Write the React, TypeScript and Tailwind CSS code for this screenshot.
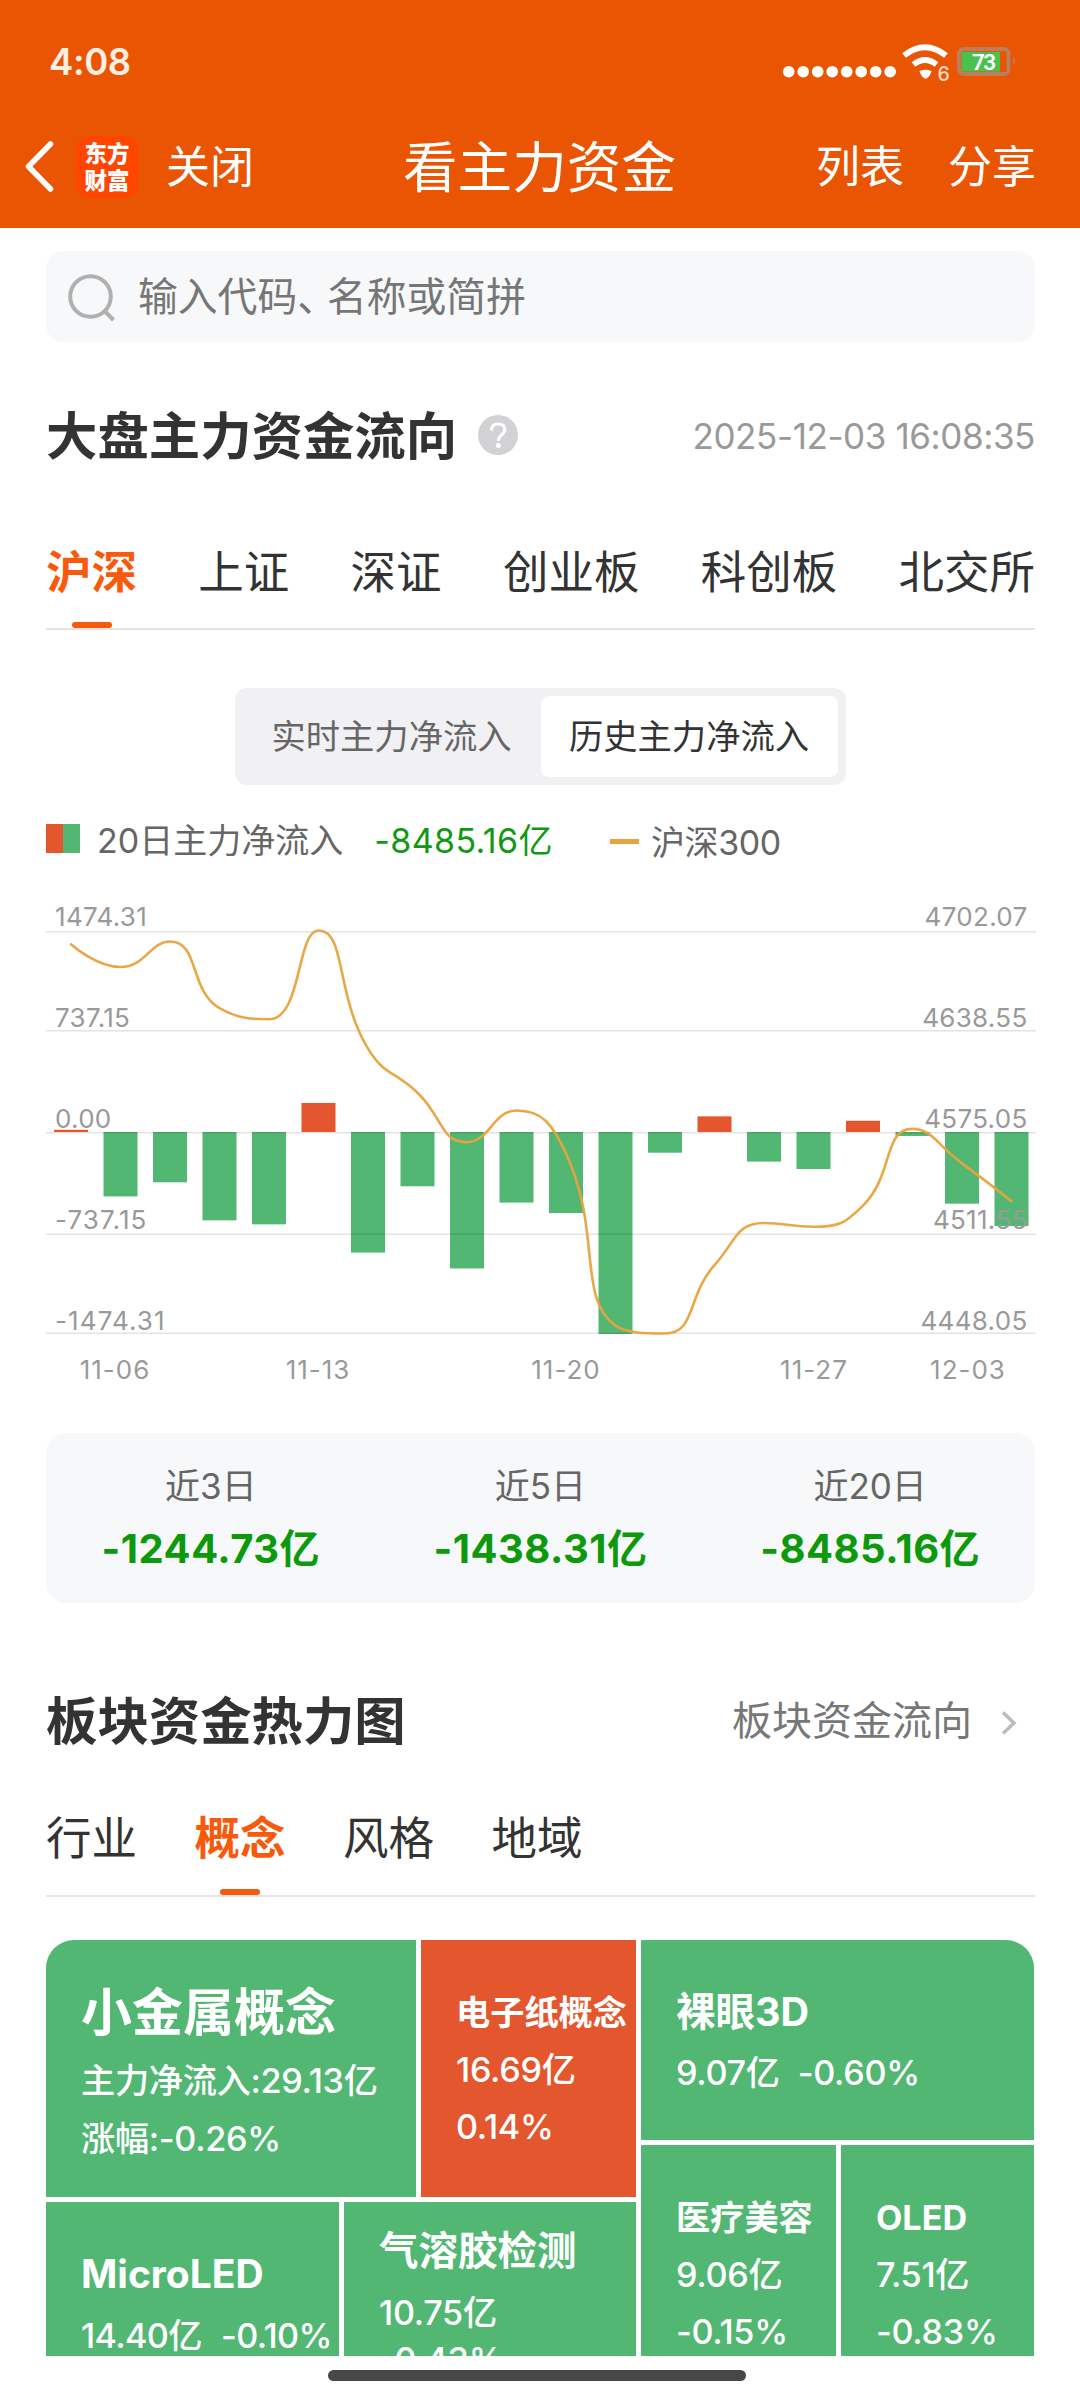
// 看主力资金 — 大盘主力资金流向 + 板块资金热力图
import type { ReactNode } from "react";
import clsx from "clsx";

const MARKET_TABS = ["沪深", "上证", "深证", "创业板", "科创板", "北交所"];
const SECTOR_TABS = ["行业", "概念", "风格", "地域"];

const SUMMARY = [
  { label: "近3日", value: "-1244.73亿" },
  { label: "近5日", value: "-1438.31亿" },
  { label: "近20日", value: "-8485.16亿" },
];

// 每日主力净流入（亿）
const FLOWS = [
  16, -470, -367, -645, -674, 212, -880, -396, -996, -515, -592, -1474.31, -151,
  114, -216, -270, 82, -29, -523, -686,
];
// 沪深300 收盘
const INDEX = [
  4694.3, 4679.9, 4696.1, 4653.9, 4646.9, 4703, 4628.3, 4600.4, 4569.1, 4589.1,
  4562, 4453, 4448.05, 4491.3, 4518, 4515.6, 4529, 4577.5, 4555.7, 4531.8,
];

const GRID = [
  { y: 39, left: "1474.31", right: "4702.07" },
  { y: 138, left: "737.15", right: "4638.55" },
  { y: 240, left: "0.00", right: "4575.05" },
  { y: 341.5, left: "-737.15", right: "4511.55" },
  { y: 440.5, left: "-1474.31", right: "4448.05" },
];
const DATES = [
  { x: 69, text: "11-06" },
  { x: 272, text: "11-13" },
  { x: 520, text: "11-20" },
  { x: 768, text: "11-27" },
  { x: 922, text: "12-03" },
];

const ZERO = 239;
const STEP = 49.5;
const centerX = (i: number) => 25 + i * STEP;
const flowY = (v: number) => ZERO - (v / 1474.31) * 202;
const indexY = (v: number) => 440.5 - ((v - 4448.05) / 254.02) * 401.5;

const clamp = (v: number, a: number, b: number) =>
  Math.min(Math.max(v, Math.min(a, b)), Math.max(a, b));

// Smooth bezier through all points, control points never overshoot a segment
function smoothPath(pts: number[][]) {
  let d = `M${pts[0][0]} ${pts[0][1]}`;
  let cp = pts[0];
  for (let i = 1; i < pts.length; i++) {
    const prev = pts[i - 1];
    const p = pts[i];
    const next = pts[i + 1];
    let cpIn = p;
    let cpOut = p;
    if (next) {
      const lenPrev = Math.hypot(p[0] - prev[0], p[1] - prev[1]);
      const lenNext = Math.hypot(next[0] - p[0], next[1] - p[1]);
      const ratio = lenNext / (lenNext + lenPrev);
      cpOut = [0, 1].map((k) =>
        clamp(p[k] + (next[k] - prev[k]) * 0.5 * ratio, p[k], next[k])
      );
      cpIn = [0, 1].map((k) =>
        clamp(p[k] - ((cpOut[k] - p[k]) * lenPrev) / lenNext, prev[k], p[k])
      );
      cpOut = [0, 1].map((k) => p[k] + ((p[k] - cpIn[k]) * lenNext) / lenPrev);
    }
    d += `C${cp[0]} ${cp[1]} ${cpIn[0]} ${cpIn[1]} ${p[0]} ${p[1]}`;
    cp = cpOut;
  }
  return d;
}

function StatusBar() {
  return (
    <div className="flex h-[96px] items-start justify-between pt-[40px] pl-[49px] pr-[64px] text-[#ffeee2]">
      <span className="text-[36.500px] leading-[44px] font-semibold tracking-[-0.4px]">4:08</span>
      <svg width="236" height="56" viewBox="0 0 236 56" className="text-white">
        {Array.from({ length: 8 }, (_, i) => (
          <circle key={i} cx={8.7 + i * 14.5} cy="31.700" r="5.800" fill="currentColor" />
        ))}
        <g fill="none" stroke="currentColor" strokeWidth="6">
          <path d="M124 15.500Q145 -1 166 15.500" />
          <path d="M133.500 24.500Q145 15.500 156.500 24.500" />
        </g>
        <path d="M139.500 31Q145.500 28.500 151.500 31Q150.500 36 145.500 39Q140.500 36 139.500 31Z" fill="currentColor" />
        <text x="157.500" y="41" fontSize="19.500" fontWeight="500" fill="#ffdcc4">6</text>
        <rect x="179" y="9" width="49.500" height="25" rx="4.500" fill="none" stroke="#b9805f" strokeWidth="3.800" />
        <path d="M233.500 17.500Q236.500 20.500 233.500 24Z" fill="#b9805f" stroke="#b9805f" />
        <rect x="181.500" y="12" width="38.500" height="19.500" fill="#4ac14e" />
        <text x="192" y="30" fontSize="22.500" fontWeight="600" letterSpacing="-1.500" fill="#fff" className="font-['Roboto',sans-serif]">73</text>
      </svg>
    </div>
  );
}

function NavBar() {
  return (
    <div className="flex h-[132px] items-center pt-[10px] pl-[24px] pr-[44px] text-white">
      <div className="flex w-[379px] items-center">
        <svg width="32" height="54" viewBox="0 0 32 54" fill="none" stroke="currentColor" strokeWidth="5.500" strokeLinecap="round" strokeLinejoin="round">
          <path d="M26.500 4L4.500 26.500L26.500 49" />
        </svg>
        <div className="ml-[20px] flex h-[62px] w-[62px] flex-col items-center justify-center rounded-[13px] bg-[#ff4500] text-[22.500px] leading-[27px] font-black">
          <span>东方</span>
          <span>财富</span>
        </div>
        <span className="ml-[28px] text-[44px] leading-[60px]">关闭</span>
      </div>
      <h1 className="text-[54.600px] leading-[70px]">看主力资金</h1>
      <div className="ml-auto flex gap-[44px] text-[44px] leading-[60px]">
        <span>列表</span>
        <span>分享</span>
      </div>
    </div>
  );
}

function Tab({ active, children }: { active?: boolean; children: ReactNode }) {
  return (
    <div
      className={clsx(
        "flex flex-col items-center justify-between text-[45.500px] leading-[60px]",
        active ? "font-bold text-[#f75a0c]" : "text-[#333]"
      )}
    >
      <span>{children}</span>
      <span className={clsx("h-[6px] w-[40px] rounded-full", active && "bg-[#f75a0c]")} />
    </div>
  );
}

function FlowChart() {
  const line = smoothPath(INDEX.map((v, i) => [centerX(i), indexY(v)]));
  return (
    <svg width="990" height="500" viewBox="0 0 990 500" fontSize="26">
      {FLOWS.map((v, i) => (
        <rect
          key={i}
          x={centerX(i) - 17}
          y={Math.min(ZERO, flowY(v))}
          width="34"
          height={Math.abs(flowY(v) - ZERO)}
          fill={v > 0 ? "#e4572e" : "#52b773"}
        />
      ))}
      {GRID.map((g) => (
        <rect key={g.y} y={g.y - 1} width="990" height="1.500" fill="#000" fillOpacity="0.11" />
      ))}
      <path d={line} fill="none" stroke="#e8a33d" strokeOpacity="0.95" strokeWidth="2.600" strokeLinecap="round" />
      <g fill="#999">
        {GRID.map((g, i) => (
          <g key={g.y}>
            <text x="9" y={32.5 + i * 101} letterSpacing={g.left.startsWith("-") ? 1.1 : 0.3}>{g.left}</text>
            <text x="981.500" y={32.5 + i * 101} textAnchor="end" letterSpacing="0.3">{g.right}</text>
          </g>
        ))}
        {DATES.map((d) => (
          <text key={d.text} x={d.x} y="485.500" textAnchor="middle" letterSpacing="1">{d.text}</text>
        ))}
      </g>
    </svg>
  );
}

interface CellProps {
  className: string;
  nameClass: string;
  name: string;
  children: ReactNode;
}

function Cell({ className, nameClass, name, children }: CellProps) {
  return (
    <div className={clsx("shrink-0 overflow-hidden pl-[35px] text-[34.200px] leading-[57px] font-medium tracking-[-0.3px] whitespace-nowrap text-white", className)}>
      <div className={clsx("font-bold tracking-normal", nameClass)}>{name}</div>
      {children}
    </div>
  );
}

function HeatMap() {
  return (
    <div className="mt-[43px] flex h-[416px] gap-[5px] overflow-hidden rounded-t-[28px]">
      <div className="flex w-[590px] flex-col gap-[5px]">
        <div className="flex h-[257px] shrink-0 gap-[5px]">
          <Cell className="w-[370px] bg-[#52b773] pt-[43px]" nameClass="text-[51px] leading-[60px]" name="小金属概念">
            <div className="pt-[9px] leading-[58px]">
              <p>主力净流入:29.13亿</p>
              <p>涨幅:-0.26%</p>
            </div>
          </Cell>
          <Cell className="w-[215px] bg-[#e4572e] pt-[44px]" nameClass="text-[34.200px] leading-[57px]" name="电子纸概念">
            <p>16.69亿</p>
            <p>0.14%</p>
          </Cell>
        </div>
        <div className="flex h-[257px] shrink-0 gap-[5px]">
          <Cell className="w-[293px] bg-[#52b773] pt-[42px]" nameClass="text-[39px] leading-[60px]" name="MicroLED">
            <p className="pt-[3px] tracking-[-0.6px]">
              14.40亿<span className="ml-[19px]">-0.10%</span>
            </p>
          </Cell>
          <Cell className="w-[292px] bg-[#52b773] pt-[19px]" nameClass="text-[39.500px] leading-[60px]" name="气溶胶检测">
            <p className="pt-[3px]">10.75亿</p>
            <p className="-mt-[10px]">-0.43%</p>
          </Cell>
        </div>
      </div>
      <div className="flex w-[394px] flex-col gap-[5px]">
        <Cell className="h-[200px] bg-[#52b773] pt-[42px]" nameClass="text-[39.500px] leading-[60px]" name="裸眼3D">
          <p className="pt-[2px]">
            9.07亿<span className="ml-[18px]">-0.60%</span>
          </p>
        </Cell>
        <div className="flex h-[257px] shrink-0 gap-[5px]">
          <Cell className="w-[195px] bg-[#52b773] pt-[44px]" nameClass="text-[34.200px] leading-[57px]" name="医疗美容">
            <p>9.06亿</p>
            <p>-0.15%</p>
          </Cell>
          <Cell className="w-[194px] bg-[#52b773] pt-[44px]" nameClass="text-[34.200px] leading-[57px]" name="OLED">
            <p>7.51亿</p>
            <p>-0.83%</p>
          </Cell>
        </div>
      </div>
    </div>
  );
}

export default function App() {
  return (
    <div
      lang="zh-CN"
      className="flex h-[2400px] w-[1080px] flex-col overflow-hidden bg-white font-['Inter','Noto_Sans_CJK_SC',sans-serif] text-[#333]"
    >
      <header className="h-[228px] shrink-0 bg-[#ea5504]">
        <StatusBar />
        <NavBar />
      </header>

      <main className="flex flex-col px-[46px]">
        {/* Search */}
        <div className="mt-[23px] flex h-[91px] w-[989px] shrink-0 items-center rounded-[17px] bg-[#f7f8fa] pl-[22px] text-[#767676]">
          <svg width="48" height="50" viewBox="0 0 48 50" fill="none" stroke="#b0b0b0" strokeWidth="4">
            <circle cx="22.500" cy="24.500" r="20.300" />
            <path d="M36.500 39L45.500 48" />
          </svg>
          <span className="ml-[22px] text-[39.800px] leading-[56px]">
            输入代码<span className="tracking-[-10px]">、</span>名称或简拼
          </span>
        </div>

        {/* Market flow */}
        <div className="mt-[58px] flex h-[72px] w-[989px] items-center">
          <h2 className="text-[51.400px] leading-[72px] font-bold">大盘主力资金流向</h2>
          <svg width="40" height="40" viewBox="0 0 40 40" className="-mt-[2px] ml-[21px]">
            <circle cx="20" cy="20" r="20" fill="#d2d2d4" />
            <path d="M13.500 15.500Q13.500 9 20 9Q26.800 9 26.800 14.500Q26.800 17.500 23.500 20Q20.300 22.500 20.300 26" fill="none" stroke="#fff" strokeWidth="3.200" />
            <circle cx="20.300" cy="30.500" r="2.500" fill="#fff" />
          </svg>
          <span className="ml-auto text-[35px] leading-[48px] tracking-[-0.4px] text-[#999]">
            2025-12-03 16:08:35
          </span>
        </div>

        <div className="mt-[71px] flex h-[87px] w-[989px] justify-between border-b-2 border-[#e5e5e5]">
          {MARKET_TABS.map((tab, i) => (
            <Tab key={tab} active={i === 0}>{tab}</Tab>
          ))}
        </div>

        <div className="mt-[58px] flex h-[97px] w-[611px] items-center self-center rounded-[12px] bg-[#f1f1f4] p-[8px] text-[34.300px] leading-[48px]">
          <span className="flex-1 text-center text-[#666]">实时主力净流入</span>
          <span className="flex h-[81px] w-[297px] items-center justify-center rounded-[8px] bg-white">历史主力净流入</span>
        </div>

        {/* Legend */}
        <div className="mt-[31px] flex h-[50px] items-center text-[34px] leading-[48px] text-[#666]">
          <span className="-mt-[5px] flex h-[29px] w-[34px]">
            <span className="w-[17px] bg-[#e4572e]" />
            <span className="w-[17px] bg-[#52b773]" />
          </span>
          <span className="ml-[17px]">20日主力净流入</span>
          <span className="ml-[31px] tracking-[0.4px] text-[#119911]">-8485.16亿</span>
          <span className="ml-[57px] h-[5px] w-[29px] bg-[#e8a33d]" />
          <span className="ml-[12px] pt-[3px] tracking-[-0.4px]">沪深300</span>
        </div>

        <div className="mt-[27px] h-[500px]">
          <FlowChart />
        </div>

        <div className="mt-[40px] grid h-[170px] w-[989px] grid-cols-3 rounded-[20px] bg-[#f7f8fa] pt-[29px] text-center">
          {SUMMARY.map((s) => (
            <div key={s.label}>
              <p className="text-[35px] leading-[48px] text-[#666]">{s.label}</p>
              <p className="mt-[11px] text-[40px] leading-[56px] font-bold tracking-[0.5px] text-[#0c9a0c]">{s.value}</p>
            </div>
          ))}
        </div>

        {/* Sector heat map */}
        <div className="mt-[82px] flex h-[72px] w-[989px] items-center">
          <h2 className="text-[51.400px] leading-[72px] font-bold">板块资金热力图</h2>
          <span className="ml-auto text-[40px] leading-[56px] text-[#777]">板块资金流向</span>
          <svg width="16" height="24" viewBox="0 0 16 24" className="mt-[3px] mr-[18px] ml-[29px]" fill="none" stroke="#bbb" strokeWidth="3.500">
            <path d="M2 1.500L13 12L2 22.500" />
          </svg>
        </div>

        <div className="mt-[52px] flex h-[88px] w-[989px] gap-[57.500px] border-b-2 border-[#e5e5e5]">
          {SECTOR_TABS.map((tab) => (
            <Tab key={tab} active={tab === "概念"}>{tab}</Tab>
          ))}
        </div>

        <HeatMap />
      </main>

      {/* Home indicator */}
      <div className="mt-[14px] mr-[6px] h-[11px] w-[418px] shrink-0 self-center rounded-full bg-[#474747]" />
    </div>
  );
}
